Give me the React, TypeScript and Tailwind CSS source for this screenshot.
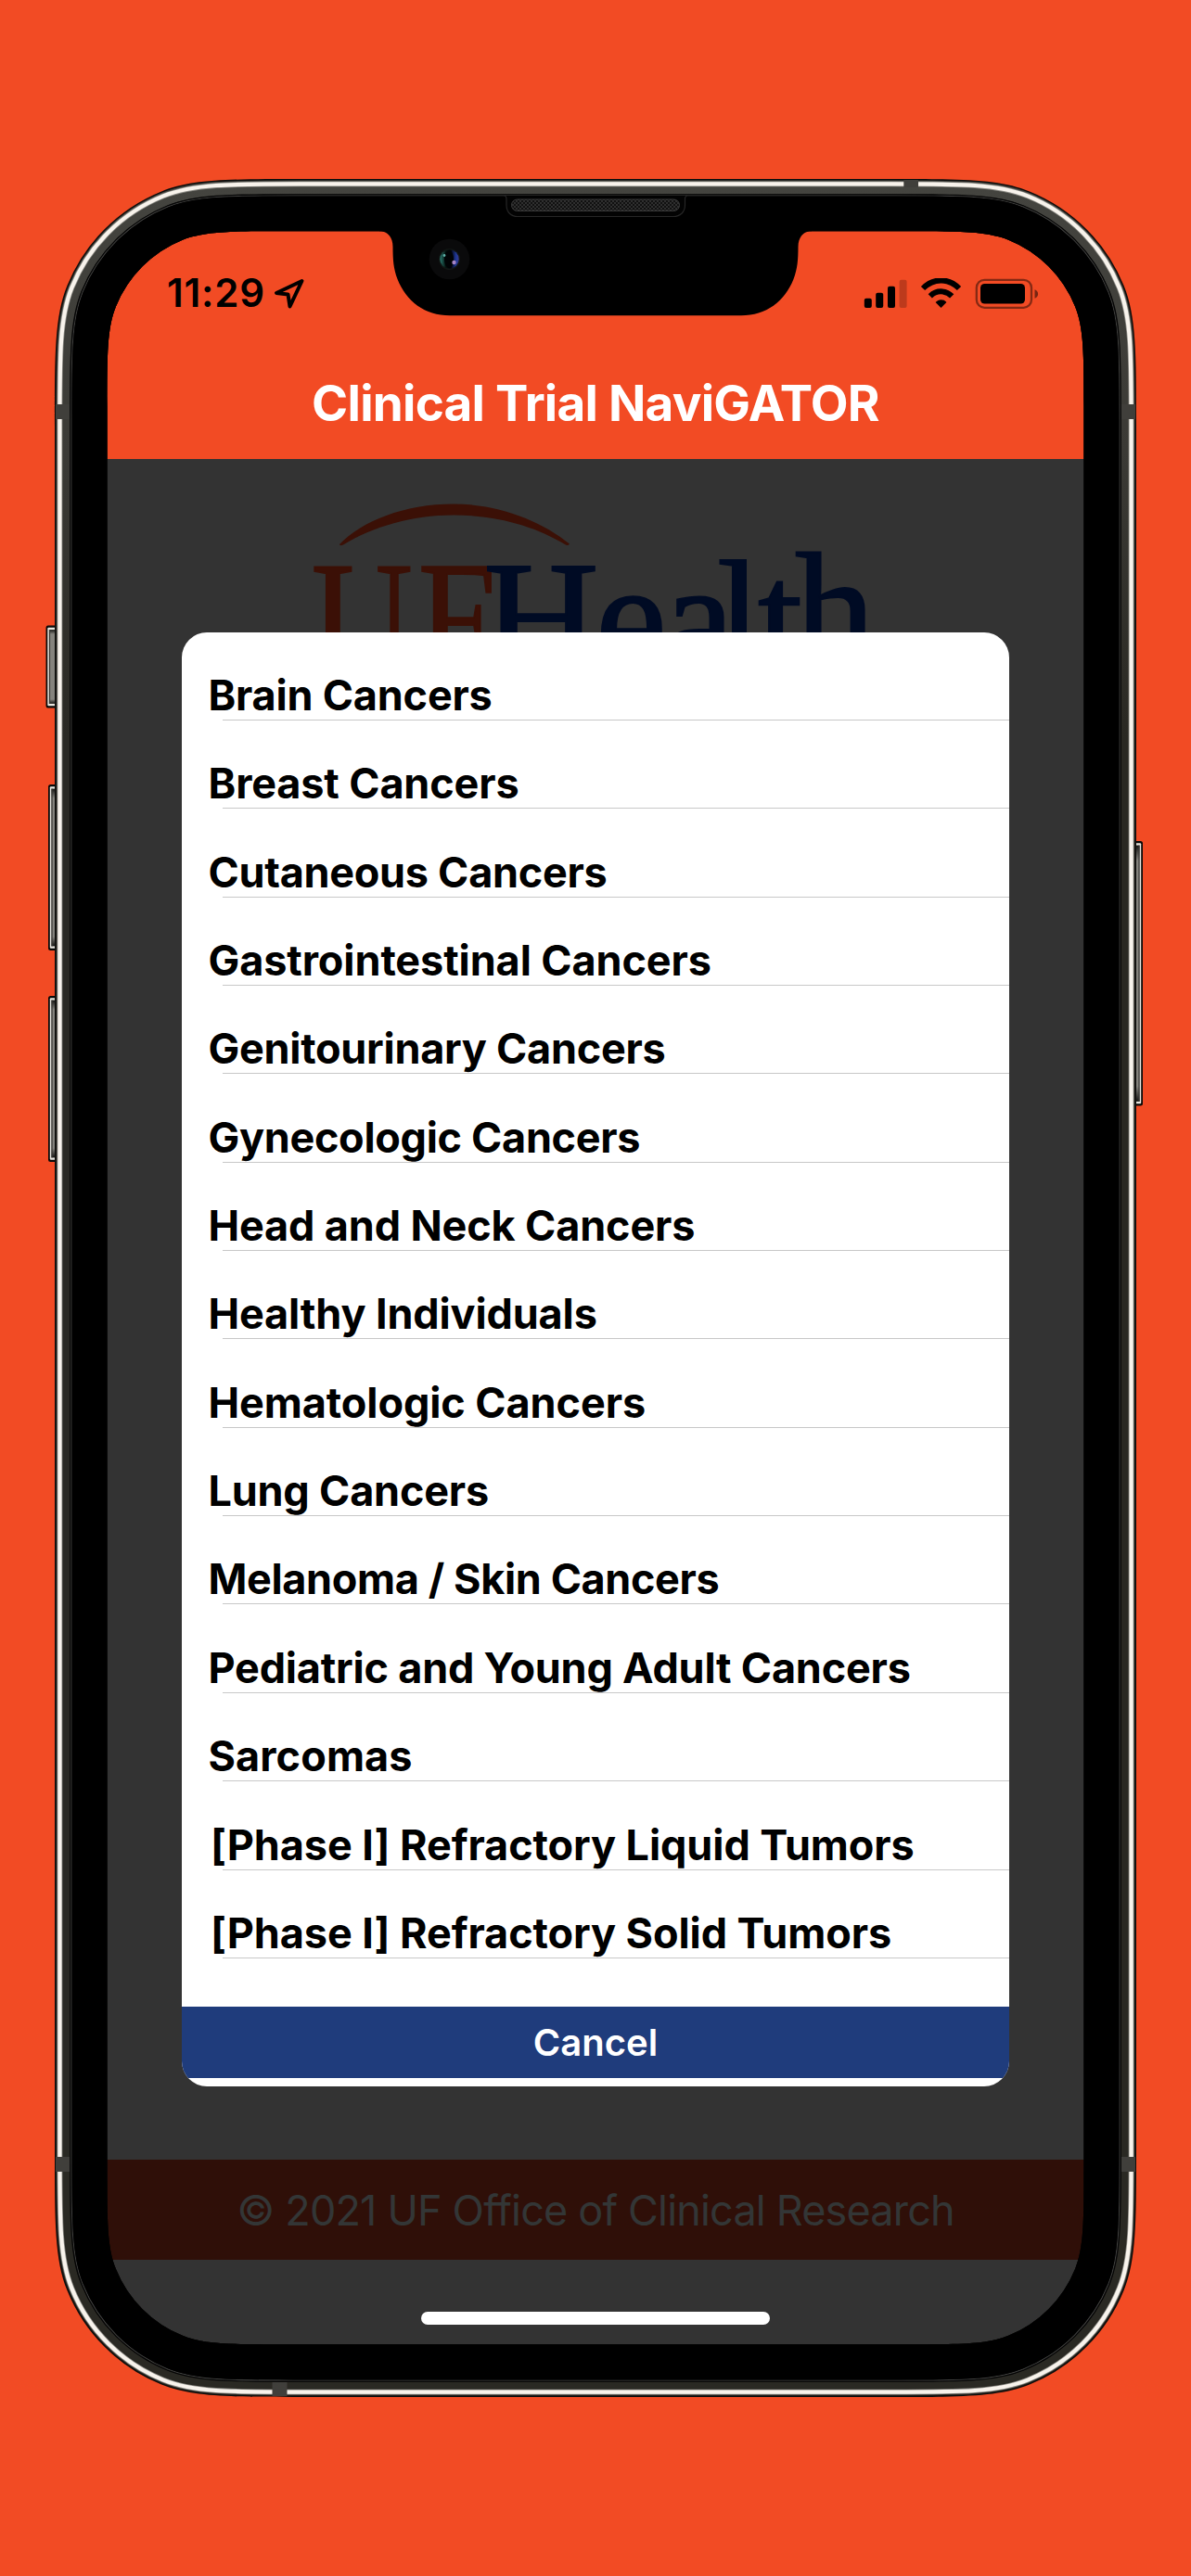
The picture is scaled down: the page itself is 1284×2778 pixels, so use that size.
import React from "react";

const options: { label: string; tracking: string }[] = [
  { label: "Brain Cancers", tracking: "ml-[28.5px] tracking-[-0.2px]" },
  { label: "Breast Cancers", tracking: "ml-[28.5px] tracking-[-0.14px]" },
  { label: "Cutaneous Cancers", tracking: "ml-[28.5px] tracking-[-0.28px]" },
  { label: "Gastrointestinal Cancers", tracking: "ml-[28.5px] tracking-[-0.09px]" },
  { label: "Genitourinary Cancers", tracking: "ml-[28.5px] tracking-[-0.26px]" },
  { label: "Gynecologic Cancers", tracking: "ml-[28.5px] tracking-[-0.31px]" },
  { label: "Head and Neck Cancers", tracking: "ml-[28.5px] tracking-[-0.14px]" },
  { label: "Healthy Individuals", tracking: "ml-[28.5px] tracking-[-0.13px]" },
  { label: "Hematologic Cancers", tracking: "ml-[28.5px] tracking-[-0.08px]" },
  { label: "Lung Cancers", tracking: "ml-[28.5px] tracking-[-0.2px]" },
  { label: "Melanoma / Skin Cancers", tracking: "ml-[28.5px] tracking-[-0.37px]" },
  { label: "Pediatric and Young Adult Cancers", tracking: "ml-[28.5px] tracking-[-0.2px]" },
  { label: "Sarcomas", tracking: "ml-[28.5px] tracking-[0.1px]" },
  { label: "[Phase I] Refractory Liquid Tumors", tracking: "ml-[31px] tracking-[-0.08px]" },
  { label: "[Phase I] Refractory Solid Tumors", tracking: "ml-[31px] tracking-[-0.08px]" },
];

/** Rounded rectangle whose corners ease from the straight edge into a circular arc. */
function squircle(x0: number, y0: number, x1: number, y1: number, r: number) {
  const a = 1.45 * r;
  const b = 1.02 * r;
  const c = 0.8056 * r;
  const d = 0.6254 * r;
  const e = 0.0728 * r;
  const arc = `A${r} ${r} 0 0 1`;
  return [
    `M${x0 + a} ${y0}H${x1 - a}`,
    `C${x1 - b} ${y0} ${x1 - c} ${y0} ${x1 - d} ${y0 + e}`,
    `${arc} ${x1 - e} ${y0 + d}`,
    `C${x1} ${y0 + c} ${x1} ${y0 + b} ${x1} ${y0 + a}V${y1 - a}`,
    `C${x1} ${y1 - b} ${x1} ${y1 - c} ${x1 - e} ${y1 - d}`,
    `${arc} ${x1 - d} ${y1 - e}`,
    `C${x1 - c} ${y1} ${x1 - b} ${y1} ${x1 - a} ${y1}H${x0 + a}`,
    `C${x0 + b} ${y1} ${x0 + c} ${y1} ${x0 + d} ${y1 - e}`,
    `${arc} ${x0 + e} ${y1 - d}`,
    `C${x0} ${y1 - c} ${x0} ${y1 - b} ${x0} ${y1 - a}V${y0 + a}`,
    `C${x0} ${y0 + b} ${x0} ${y0 + c} ${x0 + e} ${y0 + d}`,
    `${arc} ${x0 + d} ${y0 + e}`,
    `C${x0 + c} ${y0} ${x0 + b} ${y0} ${x0 + a} ${y0}Z`,
  ].join("");
}

const screenHole = squircle(115.5, 249.3, 1168.5, 2528.2, 130);

function SideButton({ x, y, w, h, flip }: { x: number; y: number; w: number; h: number; flip?: boolean }) {
  return (
    <g transform={flip ? `translate(${2 * x + w} 0) scale(-1 1)` : undefined}>
      <rect x={x} y={y} width={w + 4} height={h} rx="2.5" fill="#0a0a08" />
      <rect x={x + 1.8} y={y + 2.2} width={w} height={h - 4.4} rx="1" fill="#e9e6df" />
      <rect x={x + 3.4} y={y + 4.6} width={w} height={h - 9.2} fill="url(#button)" />
      <rect x={x + 3.4} y={y + 4.6} width="1.2" height={h - 9.2} fill="#3a3935" />
    </g>
  );
}

function DeviceFrame() {
  return (
    <svg className="pointer-events-none absolute inset-0" width="1284" height="2778" viewBox="0 0 1284 2778" aria-hidden="true">
      <defs>
        <linearGradient id="body" x1="0" y1="0" x2="0" y2="1">
          <stop offset="0" stopColor="#44443f" />
          <stop offset="0.12" stopColor="#3b3a35" />
          <stop offset="0.25" stopColor="#2a2923" />
          <stop offset="1" stopColor="#2a2923" />
        </linearGradient>
        <linearGradient id="button" x1="0" y1="0" x2="0" y2="1">
          <stop offset="0" stopColor="#161512" />
          <stop offset="0.06" stopColor="#85837d" />
          <stop offset="0.94" stopColor="#85837d" />
          <stop offset="1" stopColor="#161512" />
        </linearGradient>
        <linearGradient id="lens" x1="0" y1="0" x2="1" y2="0">
          <stop offset="0" stopColor="#2a7a70" />
          <stop offset="0.3" stopColor="#04130f" />
          <stop offset="0.58" stopColor="#010208" />
          <stop offset="0.85" stopColor="#1e3796" />
          <stop offset="1" stopColor="#3a3a8c" />
        </linearGradient>
        <pattern id="mesh" width="4" height="4" patternUnits="userSpaceOnUse">
          <rect width="4" height="4" fill="#111" />
          <rect width="2" height="2" fill="#2f2f2f" />
          <rect x="2" y="2" width="2" height="2" fill="#2f2f2f" />
        </pattern>
      </defs>

      <SideButton x={49.5} y={674.5} w={10} h={89} />
      <SideButton x={52} y={846} w={8} h={179} />
      <SideButton x={52} y={1074} w={8} h={179} />
      <SideButton x={1224} y={907} w={8} h={285.5} flip />

      <path fillRule="evenodd" fill="#0d0d0b" d={squircle(59, 193, 1225, 2585, 184) + screenHole} />
      <path fill="none" stroke="url(#body)" strokeWidth="15" d={squircle(68, 202, 1216, 2576, 175)} />
      <path fill="none" stroke="#8b8a84" strokeWidth="5.8" d={squircle(64.4, 198.4, 1219.6, 2579.6, 178.6)} />
      <path fill="none" stroke="#f8f3ec" strokeWidth="4.2" d={squircle(64.4, 198.4, 1219.6, 2579.6, 178.6)} />
      <path fillRule="evenodd" fill="#050505" d={squircle(75.2, 209.2, 1208.8, 2568.8, 168) + screenHole} />
      <path fill="none" stroke="#424240" strokeWidth="1.1" d={squircle(77, 211, 1207, 2567, 166.2)} />
      <path fillRule="evenodd" fill="#000" d={squircle(77.6, 211.6, 1206.4, 2566.4, 165.6) + screenHole} />

      <g fill="#403f3b">
        <rect x="60" y="436" width="15" height="16" />
        <rect x="1209" y="436" width="15" height="16" />
        <rect x="60" y="2326" width="15" height="16" />
        <rect x="1209" y="2326" width="15" height="16" />
        <rect x="974.3" y="194" width="15.7" height="8" />
        <rect x="293.5" y="2569" width="16" height="15" />
      </g>

      <path
        fill="#000"
        d="M409 248V249.3C418 249.3 423.5 256 423.5 266C423.5 280 424.2 290 428.5 301C438 325 458 340.3 485 340.3H799C826 340.3 846 325 855.5 301C859.8 290 860.5 280 860.5 266C860.5 256 866 249.3 875 249.3V248Z"
      />
      <path fill="#030303" stroke="#262626" strokeWidth="1.2" d="M543.5 211C546 211 546 213 546 215V221C546 229 551 233.5 558 233.5H726C733 233.5 738.5 229 738.5 221V215C738.5 213 738.5 211 741 211" />
      <rect x="551.5" y="215" width="181" height="12.5" rx="6.2" fill="url(#mesh)" stroke="#3a3a3a" strokeWidth="1" />
      <circle cx="484.5" cy="279.5" r="21.8" fill="#0a0a0b" />
      <circle cx="484.5" cy="279.5" r="11.6" fill="#111513" />
      <circle cx="484.5" cy="279.5" r="10.2" fill="url(#lens)" />
      <ellipse cx="484" cy="279.5" rx="5" ry="9.5" fill="#010305" />
      <circle cx="489.5" cy="283" r="2.2" fill="#a684c4" />
      <circle cx="479" cy="275.5" r="1.4" fill="#5fb0a8" />
    </svg>
  );
}

function StatusIcons() {
  return (
    <svg className="mt-[5px]" width="190" height="36" viewBox="0 0 190 36" aria-hidden="true">
      <rect x="0.8" y="21.8" width="8" height="10.3" rx="2" />
      <rect x="13.2" y="15.8" width="8" height="16.3" rx="2" />
      <rect x="26" y="8.8" width="8" height="23.3" rx="2" />
      <rect x="38.6" y="1.8" width="8" height="30.3" rx="2" opacity="0.22" />
      <g fill="none" stroke="#000" strokeWidth="6">
        <path d="M64 11C75.5 -0.5 91.5 -0.5 103 11" />
        <path d="M71.8 19.3C78.4 12.7 88.6 12.7 95.2 19.3" />
      </g>
      <path d="M77.6 26.1C80.7 22.2 86.3 22.2 89.4 26.1L83.5 31.9Z" />
      <rect x="121.8" y="1.8" width="59.2" height="30" rx="8.5" fill="none" stroke="#000" strokeOpacity="0.45" strokeWidth="2.3" />
      <rect x="126" y="6" width="48" height="21.6" rx="4.5" />
      <path d="M184.5 12.3C189.3 13.8 189.3 20.3 184.5 21.8Z" opacity="0.5" />
    </svg>
  );
}

function HealthLogo() {
  return (
    <svg className="ml-[215px] mt-[41px]" width="620" height="200" viewBox="330 536 620 200" aria-label="UF Health">
      <path fill="#3b1006" d="M366 587C390 562 436 543.5 489 543.5C538 543.5 584 562 614 586.5C612.5 588.5 611 588.5 609 587C578 568 536 555.5 489 555.5C444 555.5 402 568 370 587.5C368 588.5 366 588.5 366 587Z" />
      <g fontFamily="Liberation Serif, serif" fontSize="173">
        <text transform="translate(336 725) scale(0.87 1)" x="0 132" y="0" fill="#3b1006" stroke="#3b1006" strokeWidth="2">UF</text>
        <text x="521 642 715 773 817 857" y="725" dy="0 0 0 0 0 -9" fill="#000b24" stroke="#000b24" strokeWidth="2">Health</text>
      </g>
    </svg>
  );
}

export default function App() {
  return (
    <div className="relative h-[2778px] w-[1284px] overflow-hidden bg-[#f24b24] pt-[249px] font-['Inter','Liberation_Sans',sans-serif]">
      <div className="mx-auto flex h-[2280px] w-[1054px] flex-col overflow-hidden rounded-[100px] bg-[#333333]">
        <header className="h-[246px] shrink-0 bg-[#f24b24]">
          <div className="flex h-[132px] items-center justify-between pl-[65px] pr-[48px]">
            <div className="flex items-center gap-[9px] pt-[2px]">
              <span className="text-[42px] font-semibold leading-[50px] tracking-[0.8px] text-black">11:29</span>
              <svg width="34" height="34" viewBox="0 0 34 34" fill="none" stroke="#000" strokeWidth="4" strokeLinejoin="round" aria-hidden="true">
                <path d="M30.5 4L3 17L15.5 18.5L17.5 31.5Z" />
              </svg>
            </div>
            <StatusIcons />
          </div>
          <h1 className="pt-[22px] text-center text-[53px] font-bold leading-[65px] tracking-[-0.75px] text-white">Clinical Trial NaviGATOR</h1>
        </header>

        <main className="relative h-[1834px] shrink-0">
          <HealthLogo />
          <section className="absolute left-[81px] top-[186.5px] w-[892px] overflow-hidden rounded-[27px] bg-white" role="dialog">
            <ul>
              {options.map((o) => (
                <li key={o.label} className="flex h-[95.37px] flex-col justify-end">
                  <span className={`whitespace-nowrap text-[45px] font-bold leading-[52px] text-black ${o.tracking}`}>{o.label}</span>
                  <span className="ml-[44px] h-px shrink-0 bg-[#c8c8c8]" />
                </li>
              ))}
            </ul>
            <button className="mt-[52px] flex h-[77px] w-full items-center justify-center bg-[#1f3c7c] pt-[2px] text-[40px] font-semibold text-white">Cancel</button>
            <div className="h-[9px]" />
          </section>
        </main>

        <footer className="flex h-[108px] shrink-0 items-center justify-center bg-[#2f0f08] pt-px">
          <span className="whitespace-nowrap text-[45px] font-normal leading-[54px] tracking-[-0.83px] text-[#333636]">© 2021 UF Office of Clinical Research</span>
        </footer>
        <div className="mx-auto mt-[56px] h-[14px] w-[376px] shrink-0 rounded-full bg-white" />
      </div>
      <DeviceFrame />
    </div>
  );
}
